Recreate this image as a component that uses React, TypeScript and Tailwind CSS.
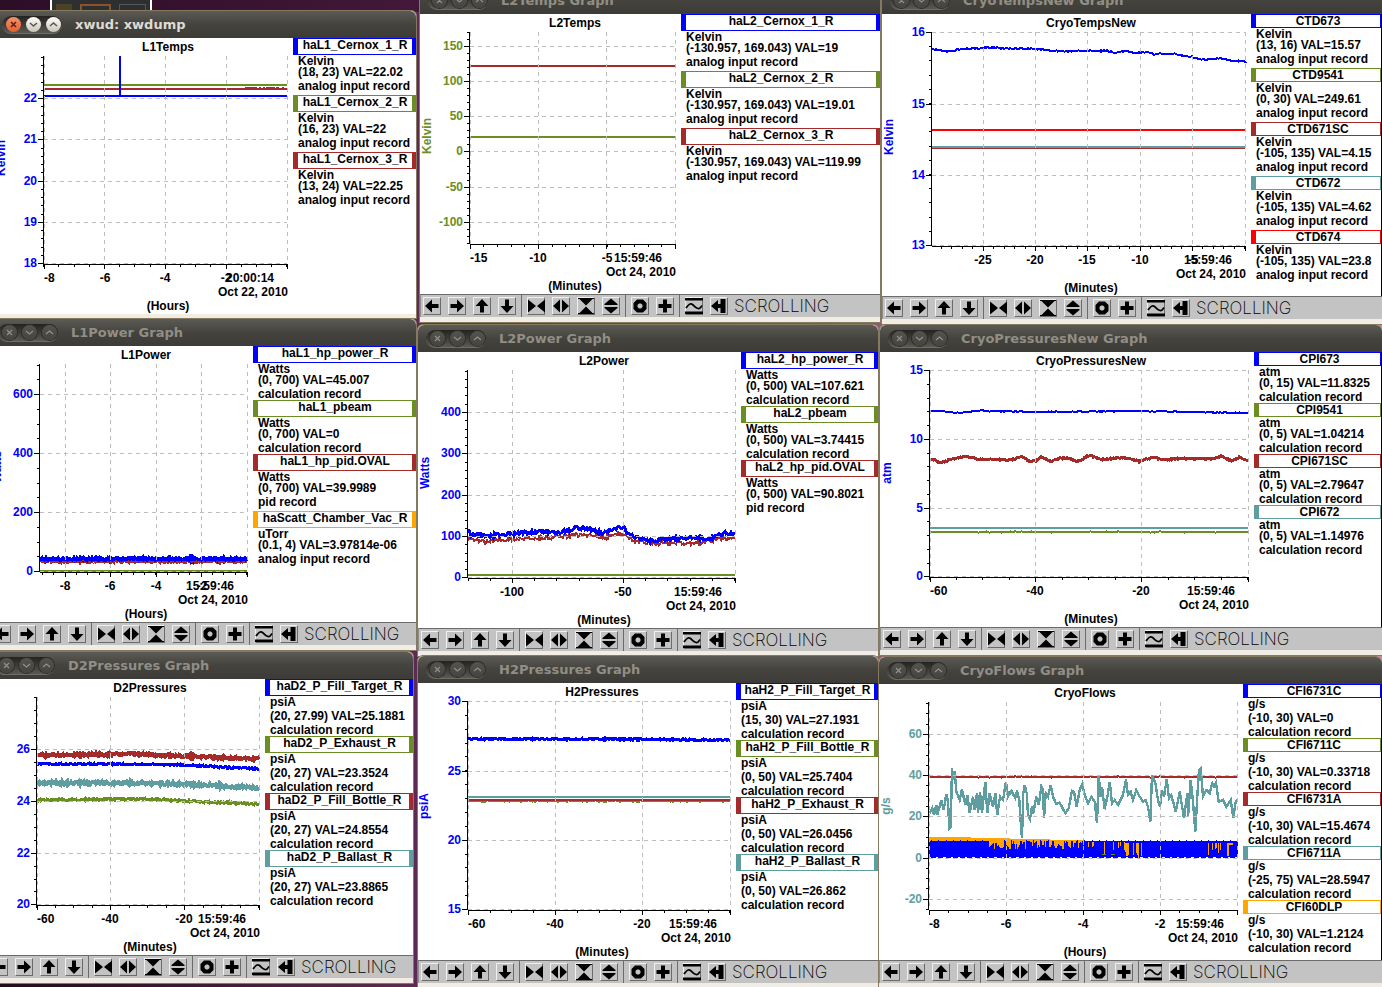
import React from "react";

type Pt = [number, number];

interface Trace {
  color: string;
  points: Pt[];
  noise?: number;
  width?: number;
  seed?: number;
}

interface Channel {
  name: string;
  unit: string;
  value: string;
  record: string;
  color: "blue" | "olive" | "brown" | "teal" | "red" | "orange";
}

interface Plot {
  title: string;
  box: [number, number, number, number];
  titleX: number;
  axisX: number;
  x0: number;
  x1: number;
  top: number;
  base: number;
  xGrid: number[];
  xLabels: [string, number, boolean?][];
  xStep: number;
  yGrid: [string, number][];
  yStep: number;
  yColor: string;
  yUnit: string;
  yUnitPos: Pt;
  span: string;
  time: string;
  date: string;
  traces: Trace[];
  extra?: React.ReactNode;
}

const BLUE = "#0000ff";
const OLIVE = "#6b8e23";
const BROWN = "#a52a2a";
const TEAL = "#5f9ea0";

const borderClass = {
  blue: "border-[#0000ff]",
  olive: "border-[#6b8e23]",
  brown: "border-[#a52a2a]",
  teal: "border-[#5f9ea0]",
  red: "border-[#ff0000]",
  orange: "border-[#ffa500]",
};

function noiseAt(i: number, seed: number) {
  const v = Math.sin(i * 12.9898 + seed * 78.233) * 43758.5453;
  return v - Math.floor(v) - 0.5;
}

function tracePoints({ points, noise = 0, seed = 1 }: Trace) {
  if (!noise) return points.map((p) => p.join(",")).join(" ");
  const out: string[] = [];
  for (let k = 0; k < points.length - 1; k++) {
    const [xa, ya] = points[k];
    const [xb, yb] = points[k + 1];
    for (let x = xa; x < xb; x += 1) {
      const y = ya + ((yb - ya) * (x - xa)) / (xb - xa);
      out.push(`${x},${Math.round((y + noiseAt(x, seed) * noise * 2) * 10) / 10}`);
    }
  }
  out.push(points[points.length - 1].join(","));
  return out.join(" ");
}

const flat = (x0: number, x1: number, y: number): Pt[] => [
  [x0, y],
  [x1, y],
];

/* Samples are stored at three units per pixel, relative to an origin. */
const fine = (ox: number, oy: number, pts: Pt[]): Pt[] =>
  pts.map(([x, y]) => [Math.round((ox + x / 3) * 10) / 10, Math.round((oy + y / 3) * 10) / 10]);

function ticks(anchor: number, step: number, min: number, max: number) {
  const out: number[] = [];
  const start = anchor - Math.floor((anchor - min) / step) * step;
  for (let v = start; v <= max + 0.5; v += step) out.push(Math.round(v));
  return out;
}

function Chart({ plot: p }: { plot: Plot }) {
  const minorX = ticks(p.xGrid[1], p.xStep, p.x0 - 1, p.x1);
  const minorY = ticks(p.yGrid[0][1], p.yStep, p.top - 1, p.base);
  const [, , w, h] = p.box;
  return (
    <svg
      width={w}
      height={h}
      viewBox={p.box.join(" ")}
      role="img"
      aria-label={p.title}
      className="block shrink-0 font-['Liberation_Sans',Arial,sans-serif] text-[12px] font-bold"
    >
      <g shapeRendering="crispEdges" fill="none">
        {p.extra}
        {p.traces.map((t, i) => (
          <polyline key={i} points={tracePoints(t)} stroke={t.color} strokeWidth={t.width ?? 2} />
        ))}
        <g stroke="#bebebe" strokeDasharray="4 4">
          {p.xGrid.map((x) => (
            <path key={x} d={`M${x + 0.5} ${p.top}V${p.base}`} />
          ))}
          {p.yGrid.map(([l, y]) => (
            <path key={l} d={`M${p.x0} ${y + 0.5}H${p.x1}`} />
          ))}
        </g>
        <g stroke="#000">
          <path d={`M${p.axisX + 0.5} ${p.top}V${p.base}M${p.x0} ${p.base + 0.5}H${p.x1 + 1}`} />
          {minorX.map((x) => (
            <path key={x} d={`M${x + 0.5} ${p.base}v3`} />
          ))}
          {p.xGrid.map((x) => (
            <path key={x} d={`M${x + 0.5} ${p.base}v5`} />
          ))}
          {minorY.map((y) => (
            <path key={y} d={`M${p.axisX - 2} ${y + 0.5}h3`} />
          ))}
          {p.yGrid.map(([l, y]) => (
            <path key={l} d={`M${p.axisX - 5} ${y + 0.5}h5`} />
          ))}
        </g>
      </g>
      <text x={p.titleX} y={p.box[1] + 13} textAnchor="middle">{p.title}</text>
      {p.yGrid.map(([l, y]) => (
        <text key={l} x={p.axisX - 6} y={y + 4} textAnchor="end" fill={p.yColor}>{l}</text>
      ))}
      {p.xLabels.map(([l, x, start]) => (
        <text key={l} x={x} y={p.base + 18} textAnchor={start ? "start" : "middle"}>{l}</text>
      ))}
      <text x={p.x1 - 37} y={p.base + 18} textAnchor="middle">{p.time}</text>
      <text x={p.x1 + 1} y={p.base + 32} textAnchor="end">{p.date}</text>
      <text x={p.titleX} y={p.base + 46} textAnchor="middle">{p.span}</text>
      <text
        transform={`translate(${p.yUnitPos[0]} ${p.yUnitPos[1]}) rotate(-90)`}
        textAnchor="middle"
        fill={p.yColor}
      >
        {p.yUnit}
      </text>
    </svg>
  );
}

function Legend({ channels, clipped }: { channels: Channel[]; clipped?: boolean }) {
  return (
    <ul className="min-w-0 flex-1 overflow-hidden whitespace-nowrap font-['Liberation_Sans',Arial,sans-serif] text-[12px] font-bold leading-[12px]">
      {channels.map((c) => (
        <li key={c.name}>
          <div
            className={`border-y border-l-[5px] text-center ${clipped ? "border-r" : "border-r-4"} ${
              c.name.includes("_") ? "h-[17px]" : "h-[14px]"
            } ${borderClass[c.color]}`}
          >
            <span className="-mx-1">{c.name}</span>
          </div>
          <div className={`pl-[5px] ${/[pg]/.test(c.unit) ? "h-[14px]" : "h-[11px]"}`}>{c.unit}</div>
          <div className="h-[14px] pl-[5px]">{c.value}</div>
          <div className={`pl-[5px] ${/[pg]/.test(c.record) ? "h-[15px]" : "h-[12px]"}`}>{c.record}</div>
        </li>
      ))}
    </ul>
  );
}

const toolGroups: { label: string; icon: React.ReactNode }[][] = [
  [
    { label: "Pan left", icon: <path d="M1 8 8 1.500V6H14.500V10H8V14.500Z" /> },
    { label: "Pan right", icon: <path d="M15 8 8 1.500V6H1.500V10H8V14.500Z" /> },
    { label: "Pan up", icon: <path d="M8 1 1.500 8H6V14.500H10V8H14.500Z" /> },
    { label: "Pan down", icon: <path d="M8 15 1.500 8H6V1.500H10V8H14.500Z" /> },
  ],
  [
    { label: "Compress horizontally", icon: <path d="M0 1.500 8 8 0 14.500ZM17 1.500 9 8 17 14.500Z" /> },
    { label: "Expand horizontally", icon: <path d="M7 1.500V14.500L0 8ZM9 1.500V14.500L16 8Z" /> },
    { label: "Compress vertically", icon: <path d="M0 0H16V1H14.500L8 7.500 1.500 1H0ZM8 8.500 14.500 15H16V16H0V15H1.500Z" /> },
    { label: "Expand vertically", icon: <path d="M8 0.500 14.500 6V7H1.500V6ZM1.500 9H14.500V10L8 15.500 1.500 10Z" /> },
  ],
  [
    {
      label: "Reset",
      icon: (
        <path fillRule="evenodd" d="M5 1.500H11L14.500 5V11L11 14.500H5L1.500 11V5ZM7 5.500 5.500 7V9L7 10.500H9L10.500 9V7L9 5.500Z" />
      ),
    },
    { label: "Zoom", icon: <path d="M6 1.500H10V6H14.500V10H10V14.500H6V10H1.500V6H6Z" /> },
  ],
  [
    {
      label: "Auto scale",
      icon: (
        <>
          <path d="M-1 0H17V2.500H-1ZM-1 13.500H17V16H-1Z" />
          <path d="M0 10C2 7.500 4 4.500 6.500 6.500S9.500 10 12 10.500 14.500 9 16 7.500" fill="none" stroke="#000" strokeWidth="1.700" />
        </>
      ),
    },
    { label: "Scroll", icon: <path d="M0 8 7 2V6H9.500V1H14.500V15H9.500V10H7V14Z" /> },
  ],
];

function Toolbar() {
  return (
    <div
      role="toolbar"
      className="flex h-[23px] overflow-hidden border-l border-t border-l-[#8d8d8d] border-t-[#6b6b6b] bg-[#c3c3c3]"
    >
      {toolGroups.map((group, g) => (
        <div
          key={g}
          className={`flex shrink-0 items-center gap-[7px] ${g === 0 ? "pl-[2px]" : "border-l border-[#6b6b6b] pl-[5px]"} ${
            g === 3 ? "" : "pr-[5px]"
          }`}
        >
          {group.map((tool) => (
            <button
              key={tool.label}
              type="button"
              aria-label={tool.label}
              className="size-[18px] border border-b-[#6b6b6b] border-l-[#f0f0f0] border-r-[#6b6b6b] border-t-[#f0f0f0] bg-[#c3c3c3]"
            >
              <svg viewBox="0 0 16 16" className="size-4 overflow-visible">{tool.icon}</svg>
            </button>
          ))}
        </div>
      ))}
      <span className="pl-[6px] font-[Inter,'Liberation_Sans',sans-serif] text-[17px] font-extralight leading-[22px] text-black">
        SCROLLING
      </span>
    </div>
  );
}

const titleIcons = [
  { label: "Close", d: "M5 5 10 10M10 5 5 10" },
  { label: "Minimize", d: "M4 6 7.500 9 11 6" },
  { label: "Maximize", d: "M4 9 7.500 6 11 9" },
];

function TitleBar({ title, active }: { title: string; active?: boolean }) {
  return (
    <header className="flex h-[27px] items-center rounded-t-md bg-linear-to-b from-[#5b5a54] via-[#44433e] to-[#3c3b37] pl-2">
      <div className="flex h-[18px] w-[60px] shrink-0 items-center gap-[5px] rounded-full border-b border-[#6d6c66] bg-linear-to-b from-[#24231f] to-[#5a5954] pl-[4px]">
        {titleIcons.map(({ label, d }, i) => (
          <button
            key={label}
            type="button"
            aria-label={`${label} ${title}`}
            className={`size-[15px] rounded-full ${
              active
                ? i === 0
                  ? "bg-linear-to-b from-[#f8906b] to-[#e3602c] text-[#5c2310]"
                  : "bg-linear-to-b from-[#fffffb] to-[#c9c5ba] text-[#5a5850]"
                : "bg-linear-to-b from-[#54534e] to-[#454440] text-[#94928a] ring-1 ring-[#2e2d2a]"
            }`}
          >
            <svg viewBox="0 0 15 15" className="size-[15px]" fill="none" stroke="currentColor" strokeWidth={active ? 1.6 : 1.1}>
              <path d={d} />
            </svg>
          </button>
        ))}
      </div>
      <h2
        className={`truncate pl-[13px] font-['DejaVu_Sans',sans-serif] text-[13px] font-bold ${
          active ? "text-[#dfdbd2]" : "text-[#918e85]"
        }`}
      >
        {title}
      </h2>
    </header>
  );
}

interface WinProps {
  title: string;
  place: string;
  plot: Plot;
  channels: Channel[];
  active?: boolean;
  clipped?: boolean;
  toolbar?: boolean;
}

function GraphWindow({ title, place, plot, channels, active, clipped, toolbar = true }: WinProps) {
  return (
    <section className={`absolute rounded-t-md border-y border-l border-[#857a60] bg-[#f1ede5] ${clipped ? "" : "border-r"} ${place}`}>
      <TitleBar title={title} active={active} />
      <div className={`flex bg-white ${clipped ? "border-r border-black" : ""}`}>
        <Chart plot={plot} />
        <Legend channels={channels} clipped={clipped} />
      </div>
      {toolbar && <Toolbar />}
      <div className={toolbar ? "h-[5px]" : "h-[4px]"} />
    </section>
  );
}

const ch = (name: string, color: Channel["color"], unit: string, value: string, record: string): Channel => ({
  name,
  color,
  unit,
  value,
  record,
});

const ANALOG = "analog input record";
const CALC = "calculation record";
const PID = "pid record";
const now = { time: "15:59:46", date: "Oct 24, 2010" };

const l1Temps: Plot = {
  title: "L1Temps", box: [-6, 38, 299, 276], titleX: 168,
  axisX: 43, x0: 44, x1: 287, top: 56, base: 264,
  xGrid: [44, 104, 165, 226, 287], xStep: 15.2,
  xLabels: [["-8", 44, true], ["-6", 105], ["-4", 165], ["-2", 226]],
  yGrid: [["22", 98], ["21", 139], ["20", 181], ["19", 222], ["18", 263]], yStep: 8.25,
  yColor: BLUE, yUnit: "Kelvin", yUnitPos: [5, 158],
  span: "(Hours)", time: "20:00:14", date: "Oct 22, 2010",
  traces: [
    { color: OLIVE, points: flat(44, 287, 85) },
    { color: BROWN, points: flat(44, 287, 89) },
    { color: BROWN, points: flat(244, 287, 88), noise: 1.2, width: 1 },
    { color: BLUE, points: flat(44, 287, 96) },
    { color: BLUE, points: [[120, 56], [120, 96]] },
  ],
};

const l2Temps: Plot = {
  title: "L2Temps", box: [420, 14, 261, 280], titleX: 575,
  axisX: 469, x0: 470, x1: 675, top: 32, base: 244,
  xGrid: [470, 538, 606, 675], xStep: 13.7,
  xLabels: [["-15", 470, true], ["-10", 538], ["-5", 607]],
  yGrid: [["150", 46], ["100", 81], ["50", 116], ["0", 151], ["-50", 187], ["-100", 222]], yStep: 7.03,
  yColor: OLIVE, yUnit: "Kelvin", yUnitPos: [431, 136],
  span: "(Minutes)", ...now,
  traces: [
    { color: BROWN, points: flat(470, 675, 66) },
    { color: OLIVE, points: flat(470, 675, 137) },
  ],
};

const cryoTemps: Plot = {
  title: "CryoTempsNew", box: [882, 14, 369, 282], titleX: 1091,
  axisX: 931, x0: 932, x1: 1245, top: 32, base: 246,
  xGrid: [983, 1035, 1087, 1140, 1192, 1245], xStep: 10.45,
  xLabels: [["-25", 983], ["-20", 1035], ["-15", 1087], ["-10", 1140], ["-5", 1193]],
  yGrid: [["16", 32], ["15", 104], ["14", 175], ["13", 245]], yStep: 14.2,
  yColor: BLUE, yUnit: "Kelvin", yUnitPos: [893, 137],
  span: "(Minutes)", ...now,
  traces: [
    {
      color: BLUE, noise: 0.7,
      points: [[932, 49], [942, 51], [953, 51], [960, 49], [983, 48], [990, 47], [1010, 49], [1040, 49], [1052, 51], [1108, 51], [1115, 53], [1127, 51], [1136, 53], [1149, 52], [1154, 54], [1175, 54], [1192, 57], [1205, 60], [1220, 58], [1233, 61], [1244, 61], [1246, 63]],
    },
    { color: "#ff0000", points: flat(932, 1245, 130) },
    { color: BROWN, points: flat(932, 1245, 148) },
    { color: TEAL, points: flat(932, 1245, 147) },
  ],
};

const l1Power: Plot = {
  title: "L1Power", box: [-10, 346, 263, 276], titleX: 146,
  axisX: 39, x0: 40, x1: 247, top: 364, base: 572,
  xGrid: [65, 110, 156, 201, 247], xStep: 11.35,
  xLabels: [["-8", 65], ["-6", 110], ["-4", 156], ["-2", 202]],
  yGrid: [["600", 394], ["400", 453], ["200", 512], ["0", 571]], yStep: 14.75,
  yColor: BLUE, yUnit: "Watts", yUnitPos: [1, 467],
  span: "(Hours)", ...now,
  traces: [
    { color: BROWN, points: flat(40, 247, 561), noise: 1.5, width: 3, seed: 4 },
    { color: BLUE, points: flat(40, 247, 559), noise: 1.4, width: 4, seed: 2 },
    { color: BROWN, points: flat(40, 247, 562), noise: 1.2, width: 1, seed: 6 },
    { color: OLIVE, points: flat(40, 247, 571) },
  ],
};

const l2Power: Plot = {
  title: "L2Power", box: [418, 352, 323, 276], titleX: 604,
  axisX: 467, x0: 468, x1: 735, top: 370, base: 578,
  xGrid: [512, 623, 735], xStep: 22.2,
  xLabels: [["-100", 512], ["-50", 623]],
  yGrid: [["400", 412], ["300", 453], ["200", 495], ["100", 536], ["0", 577]], yStep: 8.27,
  yColor: BLUE, yUnit: "Watts", yUnitPos: [429, 473],
  span: "(Minutes)", ...now,
  traces: [
    {
      color: BROWN, noise: 2, width: 2, seed: 3,
      points: [[468, 539], [485, 542], [505, 540], [520, 539], [540, 538], [560, 537], [575, 535], [590, 535], [605, 538], [615, 534], [624, 535], [635, 541], [645, 543], [660, 543], [675, 543], [690, 544], [710, 541], [725, 538], [735, 539]],
    },
    {
      color: BLUE, noise: 1.8, width: 3, seed: 5,
      points: [[468, 530], [471, 535], [490, 536], [500, 535], [510, 534], [530, 532], [560, 532], [570, 530], [576, 528], [590, 529], [604, 533], [612, 529], [624, 528], [630, 535], [640, 538], [650, 541], [665, 539], [680, 538], [700, 538], [715, 537], [725, 533], [735, 534]],
    },
    { color: OLIVE, points: flat(468, 735, 575) },
  ],
};

const cryoPressures: Plot = {
  title: "CryoPressuresNew", box: [880, 352, 374, 275], titleX: 1091,
  axisX: 929, x0: 930, x1: 1248, top: 370, base: 577,
  xGrid: [930, 1035, 1141, 1248], xStep: 26.5,
  xLabels: [["-60", 930, true], ["-40", 1035], ["-20", 1141]],
  yGrid: [["15", 370], ["10", 439], ["5", 508], ["0", 576]], yStep: 13.75,
  yColor: BLUE, yUnit: "atm", yUnitPos: [891, 473],
  span: "(Minutes)", ...now,
  traces: [
    {
      color: BLUE, noise: 0.5,
      points: [[930, 411], [942, 411], [955, 413], [970, 412], [981, 410], [986, 411], [1030, 412], [1141, 411], [1200, 412], [1248, 413]],
    },
    {
      color: BROWN, noise: 0.7, width: 3,
      points: fine(878, 320, [[157, 418], [172, 420], [184, 430], [202, 424], [226, 418], [259, 409], [280, 412], [301, 419], [331, 418], [400, 420], [430, 409], [454, 422], [475, 423], [490, 411], [520, 424], [550, 414], [574, 415], [598, 425], [634, 406], [670, 419], [700, 416], [739, 413], [784, 424], [829, 411], [850, 420], [901, 416], [979, 416], [1000, 418], [1030, 408], [1060, 424], [1084, 412], [1111, 422]]),
    },
    { color: OLIVE, points: flat(930, 1248, 532), noise: 0.6 },
    { color: TEAL, points: flat(930, 1248, 528) },
  ],
};

const d2Pressures: Plot = {
  title: "D2Pressures", box: [-13, 679, 278, 276], titleX: 150,
  axisX: 36, x0: 37, x1: 259, top: 697, base: 905,
  xGrid: [37, 110, 184, 259], xStep: 18.5,
  xLabels: [["-60", 37, true], ["-40", 110], ["-20", 184]],
  yGrid: [["26", 749], ["24", 801], ["22", 853], ["20", 904]], yStep: 12.95,
  yColor: BLUE, yUnit: "psiA", yUnitPos: [-3, 802],
  span: "(Minutes)", ...now,
  traces: [
    { color: BROWN, noise: 1.4, width: 4, seed: 2, points: [[37, 755], [130, 754], [184, 756], [259, 759]] },
    { color: BLUE, noise: 0.8, width: 3, seed: 3, points: [[37, 764], [140, 764], [184, 765], [259, 769]] },
    { color: TEAL, noise: 1.6, width: 4, seed: 4, points: [[37, 783], [140, 783], [184, 784], [259, 788]] },
    { color: OLIVE, noise: 1, width: 3, seed: 5, points: [[37, 800], [150, 799], [184, 801], [259, 804]] },
  ],
};

const h2Pressures: Plot = {
  title: "H2Pressures", box: [418, 683, 318, 277], titleX: 602,
  axisX: 467, x0: 468, x1: 730, top: 701, base: 910,
  xGrid: [468, 555, 642, 730], xStep: 21.8,
  xLabels: [["-60", 468, true], ["-40", 555], ["-20", 642]],
  yGrid: [["30", 701], ["25", 771], ["20", 840], ["15", 909]], yStep: 13.87,
  yColor: BLUE, yUnit: "psiA", yUnitPos: [428, 806],
  span: "(Minutes)", ...now,
  traces: [
    { color: BLUE, noise: 0.8, width: 3, points: [[468, 739], [600, 739], [730, 740]] },
    { color: TEAL, points: flat(468, 730, 797) },
    { color: OLIVE, points: flat(468, 730, 801), noise: 0.7 },
    { color: BROWN, points: flat(468, 730, 800) },
  ],
};

/* [first x, last x, top y, maximum depth, share of columns drawn] */
const spikeBands: [number, number, number, number, number][] = [
  [988, 1083, 840, 7, 0.7],
  [1083, 1125, 842, 10, 0.35],
  [1125, 1142, 843, 13, 0.45],
  [1208, 1222, 843, 10, 0.4],
];

const spikes = spikeBands.flatMap(([from, to, y, depth, share]) => {
  const out: [number, number, number][] = [];
  for (let x = from; x < to; x++) {
    if (noiseAt(x, 9) + 0.5 < share) out.push([x, y, 2 + Math.round((noiseAt(x, 7) + 0.5) * depth)]);
  }
  return out;
});

const cryoFlows: Plot = {
  title: "CryoFlows", box: [879, 684, 364, 276], titleX: 1085,
  axisX: 928, x0: 929, x1: 1237, top: 702, base: 910,
  xGrid: [929, 1006, 1083, 1160, 1237], xStep: 19.25,
  xLabels: [["-8", 929, true], ["-6", 1006], ["-4", 1083], ["-2", 1160]],
  yGrid: [["60", 734], ["40", 775], ["20", 816], ["0", 858], ["-20", 899]], yStep: 10.3,
  yColor: TEAL, yUnit: "g/s", yUnitPos: [890, 806],
  span: "(Hours)", ...now,
  extra: (
    <>
      <path d="M929 837H971V838H1010V839H1050V840H1083V846H929Z" fill="#ffa500" />
      <path d="M929 841H1238V857H929Z" fill={BLUE} />
      {ticks(931, 7.3, 929, 1236).map((x) => (
        <path key={x} d={`M${x + 0.5} 840V842M${x} 857.500h5`} stroke={BLUE} />
      ))}
      {spikes.map(([x, y, depth]) => (
        <path key={x} d={`M${x + 0.5} ${y}v${depth}`} stroke="#ffa500" />
      ))}
      <path d="M1127 843V856M1228 856V844H1233" stroke="#ffa500" strokeWidth="2" />
      <path d="M1102 854.500h4M1111 854.500h4" stroke={OLIVE} />
    </>
  ),
  traces: [
    { color: BROWN, points: flat(929, 1237, 777), noise: 0.6 },
    {
      color: TEAL, width: 2.4,
      points: fine(878, 650, [[155, 490], [163, 475], [168, 495], [175, 465], [178, 495], [190, 450], [197, 480], [205, 432], [210, 455], [214, 535], [218, 530], [222, 355], [226, 390], [230, 362], [235, 425], [245, 450], [252, 418], [262, 465], [268, 435], [275, 488], [285, 440], [290, 480], [297, 430], [300, 490], [306, 425], [312, 488], [322, 395], [328, 490], [335, 430], [345, 470], [352, 430], [358, 495], [366, 440], [375, 450], [384, 395], [390, 440], [400, 422], [412, 445], [417, 422], [424, 450], [428, 515], [432, 565], [436, 430], [440, 405], [446, 430], [450, 495], [456, 508], [462, 470], [466, 490], [475, 440], [482, 465], [490, 410], [495, 420], [498, 505], [503, 430], [510, 440], [518, 405], [525, 440], [535, 462], [545, 458], [562, 490], [572, 475], [582, 422], [588, 425], [596, 470], [605, 420], [613, 402], [620, 435], [630, 460], [640, 440], [650, 455], [657, 520], [662, 375], [668, 440], [672, 410], [680, 478], [690, 430], [695, 395], [702, 460], [710, 450], [720, 465], [735, 435], [744, 388], [750, 435], [758, 425], [765, 450], [775, 420], [782, 435], [795, 455], [803, 450], [810, 470], [817, 515], [822, 375], [832, 398], [840, 450], [846, 470], [852, 420], [858, 440], [866, 388], [873, 445], [880, 435], [893, 485], [905, 425], [918, 505], [928, 430], [930, 500], [938, 390], [945, 455], [952, 545], [958, 440], [963, 360], [968, 355], [975, 440], [985, 420], [995, 430], [1003, 400], [1008, 410], [1014, 398], [1022, 455], [1035, 450], [1045, 470], [1058, 450], [1066, 505], [1072, 460], [1078, 448]]),
    },
  ],
};

function Thumbnail() {
  return (
    <div className="absolute left-[50px] top-0 flex h-3 w-[102px] gap-2 border-x-2 border-white bg-[#2e2f31] px-1 pt-1">
      <span className="h-2 w-4 bg-[#4a4126]" />
      <span className="h-2 w-8 border-2 border-b-0 border-[#8a5526]" />
      <span className="h-2 w-7 border border-[#55565a]" />
    </div>
  );
}

export default function App() {
  return (
    <main className="relative h-screen w-full overflow-hidden bg-linear-to-r from-[#240a20] via-[#5e2a53] via-30% to-[#d08a9c] text-black">
      <div className="absolute left-0 top-0 h-3 w-[420px] bg-linear-to-r from-[#2c0d26] to-[#43183a]" />
      <Thumbnail />
      <GraphWindow
        title="xwud: xwdump" active toolbar={false}
        place="left-[-7px] top-[10px] w-[424px]" plot={l1Temps}
        channels={[
          ch("haL1_Cernox_1_R", "blue", "Kelvin", "(18, 23) VAL=22.02", ANALOG),
          ch("haL1_Cernox_2_R", "olive", "Kelvin", "(16, 23) VAL=22", ANALOG),
          ch("haL1_Cernox_3_R", "brown", "Kelvin", "(13, 24) VAL=22.25", ANALOG),
        ]}
      />
      <GraphWindow
        title="L2Temps Graph"
        place="left-[419px] top-[-14px] w-[462px]" plot={l2Temps}
        channels={[
          ch("haL2_Cernox_1_R", "blue", "Kelvin", "(-130.957, 169.043) VAL=19", ANALOG),
          ch("haL2_Cernox_2_R", "olive", "Kelvin", "(-130.957, 169.043) VAL=19.01", ANALOG),
          ch("haL2_Cernox_3_R", "brown", "Kelvin", "(-130.957, 169.043) VAL=119.99", ANALOG),
        ]}
      />
      <GraphWindow
        title="CryoTempsNew Graph" clipped
        place="left-[881px] right-0 top-[-14px]" plot={cryoTemps}
        channels={[
          ch("CTD673", "blue", "Kelvin", "(13, 16) VAL=15.57", ANALOG),
          ch("CTD9541", "olive", "Kelvin", "(0, 30) VAL=249.61", ANALOG),
          ch("CTD671SC", "brown", "Kelvin", "(-105, 135) VAL=4.15", ANALOG),
          ch("CTD672", "teal", "Kelvin", "(-105, 135) VAL=4.62", ANALOG),
          ch("CTD674", "red", "Kelvin", "(-105, 135) VAL=23.8", ANALOG),
        ]}
      />
      <GraphWindow
        title="L1Power Graph"
        place="left-[-11px] top-[318px] w-[428px]" plot={l1Power}
        channels={[
          ch("haL1_hp_power_R", "blue", "Watts", "(0, 700) VAL=45.007", CALC),
          ch("haL1_pbeam", "olive", "Watts", "(0, 700) VAL=0", CALC),
          ch("haL1_hp_pid.OVAL", "brown", "Watts", "(0, 700) VAL=39.9989", PID),
          ch("haScatt_Chamber_Vac_R", "orange", "uTorr", "(0.1, 4) VAL=3.97814e-06", ANALOG),
        ]}
      />
      <GraphWindow
        title="L2Power Graph"
        place="left-[417px] top-[324px] w-[462px]" plot={l2Power}
        channels={[
          ch("haL2_hp_power_R", "blue", "Watts", "(0, 500) VAL=107.621", CALC),
          ch("haL2_pbeam", "olive", "Watts", "(0, 500) VAL=3.74415", CALC),
          ch("haL2_hp_pid.OVAL", "brown", "Watts", "(0, 500) VAL=90.8021", PID),
        ]}
      />
      <GraphWindow
        title="CryoPressuresNew Graph" clipped
        place="left-[879px] right-0 top-[324px]" plot={cryoPressures}
        channels={[
          ch("CPI673", "blue", "atm", "(0, 15) VAL=11.8325", CALC),
          ch("CPI9541", "olive", "atm", "(0, 5) VAL=1.04214", CALC),
          ch("CPI671SC", "brown", "atm", "(0, 5) VAL=2.79647", CALC),
          ch("CPI672", "teal", "atm", "(0, 5) VAL=1.14976", CALC),
        ]}
      />
      <GraphWindow
        title="D2Pressures Graph"
        place="left-[-14px] top-[651px] w-[428px]" plot={d2Pressures}
        channels={[
          ch("haD2_P_Fill_Target_R", "blue", "psiA", "(20, 27.99) VAL=25.1881", CALC),
          ch("haD2_P_Exhaust_R", "olive", "psiA", "(20, 27) VAL=23.3524", CALC),
          ch("haD2_P_Fill_Bottle_R", "brown", "psiA", "(20, 27) VAL=24.8554", CALC),
          ch("haD2_P_Ballast_R", "teal", "psiA", "(20, 27) VAL=23.8865", CALC),
        ]}
      />
      <GraphWindow
        title="H2Pressures Graph"
        place="left-[417px] top-[655px] w-[462px]" plot={h2Pressures}
        channels={[
          ch("haH2_P_Fill_Target_R", "blue", "psiA", "(15, 30) VAL=27.1931", CALC),
          ch("haH2_P_Fill_Bottle_R", "olive", "psiA", "(0, 50) VAL=25.7404", CALC),
          ch("haH2_P_Exhaust_R", "brown", "psiA", "(0, 50) VAL=26.0456", CALC),
          ch("haH2_P_Ballast_R", "teal", "psiA", "(0, 50) VAL=26.862", CALC),
        ]}
      />
      <GraphWindow
        title="CryoFlows Graph" clipped
        place="left-[878px] right-0 top-[656px]" plot={cryoFlows}
        channels={[
          ch("CFI6731C", "blue", "g/s", "(-10, 30) VAL=0", CALC),
          ch("CFI6711C", "olive", "g/s", "(-10, 30) VAL=0.33718", CALC),
          ch("CFI6731A", "brown", "g/s", "(-10, 30) VAL=15.4674", CALC),
          ch("CFI6711A", "teal", "g/s", "(-25, 75) VAL=28.5947", CALC),
          ch("CFI60DLP", "orange", "g/s", "(-10, 30) VAL=1.2124", CALC),
        ]}
      />
    </main>
  );
}
